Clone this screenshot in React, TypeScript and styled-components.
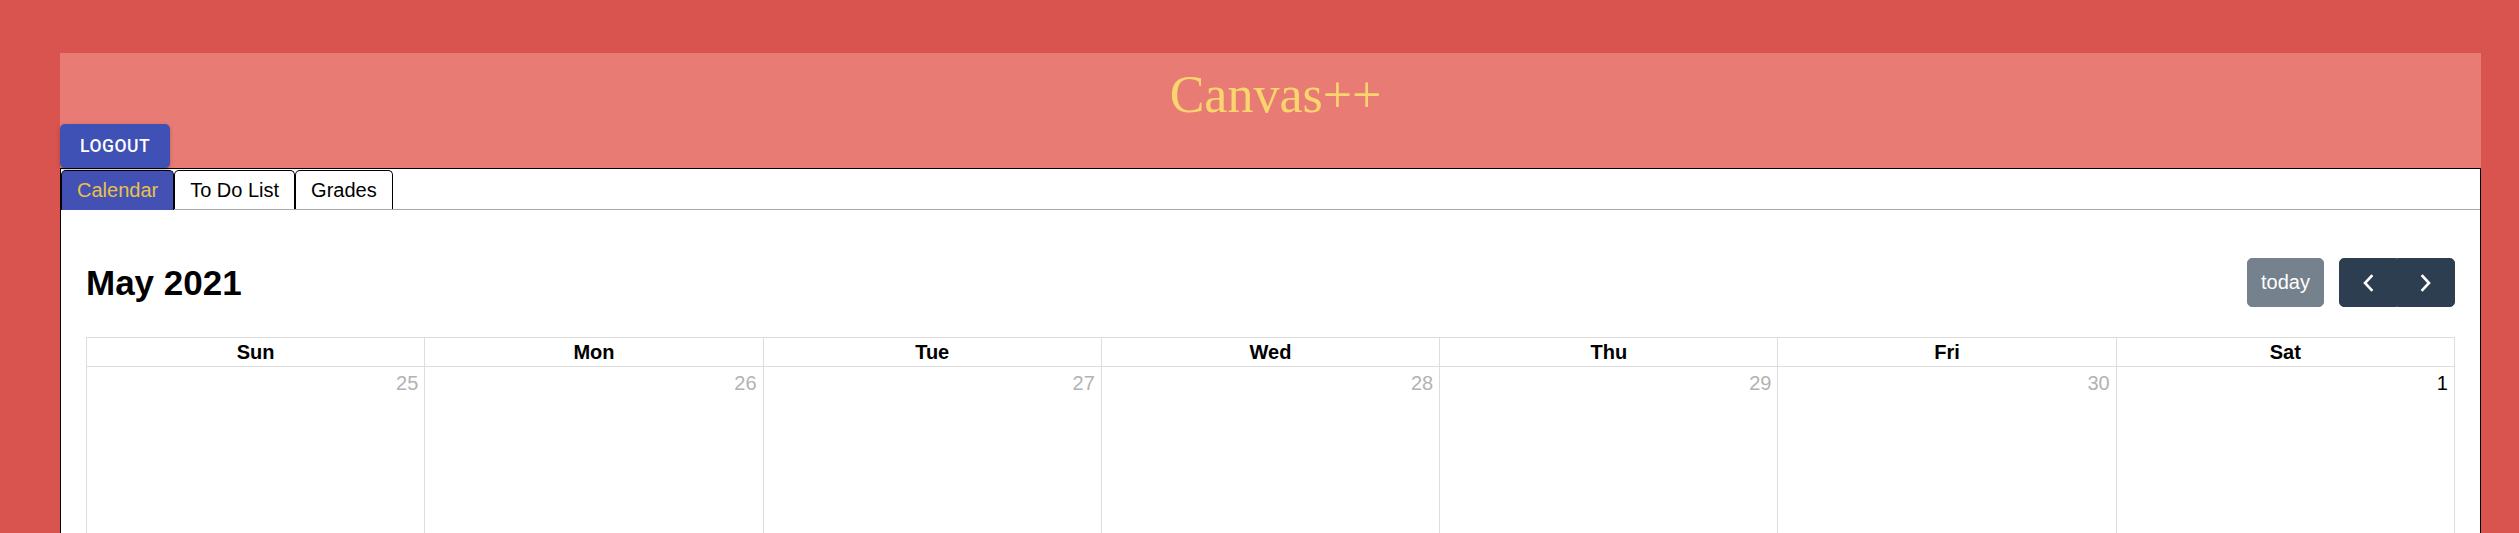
import React, { useState } from 'react';
import styled, { createGlobalStyle } from 'styled-components';

const GlobalStyle = createGlobalStyle`
  html, body {
    margin: 0;
    padding: 0;
    overflow: hidden;
    background: #d9534f;
  }
  * { box-sizing: border-box; }
`;

const Page = styled.div`
  padding: 53px 38px 0 60px;
  min-height: 100vh;
`;

const Header = styled.header`
  background: #e87b73;
  display: flex;
  flex-direction: column;
  align-items: flex-start;
`;

const SiteTitle = styled.h1`
  align-self: stretch;
  margin: 0;
  padding: 12px 0 0 10px;
  text-align: center;
  font-family: 'Liberation Serif', 'Times New Roman', serif;
  font-weight: 400;
  font-size: 52px;
  line-height: 59px;
  color: #f9d56e;
`;

const LogoutButton = styled.button`
  height: 44px;
  padding: 0 20px;
  border: none;
  border-radius: 5px;
  background: #3f51b5;
  color: #fff;
  font-family: Roboto, 'Liberation Sans', sans-serif;
  font-weight: 500;
  font-size: 17.5px;
  letter-spacing: 0.5px;
  text-transform: uppercase;
  box-shadow: 0 3px 1px -2px rgba(0, 0, 0, 0.2), 0 2px 2px 0 rgba(0, 0, 0, 0.14),
    0 1px 5px 0 rgba(0, 0, 0, 0.12);
  cursor: pointer;
`;

const Panel = styled.section`
  border: 1px solid #000;
  background: #fff;
  min-height: 400px;
`;

const TabList = styled.ul`
  display: flex;
  align-items: flex-end;
  list-style: none;
  margin: 1px 0 0;
  padding: 0;
  height: 40px;
  border-bottom: 1px solid #aaa;
`;

const Tab = styled.li<{ $active: boolean }>`
  position: relative;
  height: ${(p) => (p.$active ? '40px' : '39px')};
  margin-bottom: ${(p) => (p.$active ? '-1px' : '0')};
  padding: 7.5px 15px;
  border: 1px solid #000;
  border-bottom: none;
  border-radius: 5px 5px 0 0;
  background: ${(p) => (p.$active ? '#4351b5' : '#fff')};
  color: ${(p) => (p.$active ? '#e9c04b' : '#000')};
  font-family: 'Liberation Sans', Arial, sans-serif;
  font-size: 20px;
  line-height: 23px;
  cursor: pointer;
`;

const CalendarView = styled.div`
  padding: 48px 25px 0;
  font-family: 'Liberation Sans', Arial, sans-serif;
`;

const Toolbar = styled.div`
  display: flex;
  justify-content: space-between;
  align-items: center;
  margin-bottom: 30px;
`;

const MonthTitle = styled.h2`
  margin: 0;
  font-size: 35px;
  font-weight: 700;
  color: #000;
`;

const ToolbarGroup = styled.div`
  display: flex;
  gap: 15px;
`;

const ButtonGroup = styled.div`
  display: flex;
`;

const CalButton = styled.button<{ $disabled?: boolean; $pos?: 'left' | 'right' }>`
  display: flex;
  align-items: center;
  justify-content: center;
  height: 49px;
  padding: 0 13px;
  border: 1px solid #2c3e50;
  background: #2c3e50;
  color: #fff;
  font-family: 'Liberation Sans', Arial, sans-serif;
  font-size: 20px;
  opacity: ${(p) => (p.$disabled ? 0.65 : 1)};
  border-radius: ${(p) =>
    p.$pos === 'left' ? '5px 0 0 5px' : p.$pos === 'right' ? '0 5px 5px 0' : '5px'};
  cursor: pointer;
`;

const Grid = styled.div`
  display: grid;
  grid-template-columns: repeat(7, 1fr);
  border-top: 1px solid #ddd;
  border-left: 1px solid #ddd;
`;

const HeadCell = styled.div`
  padding: 2.5px;
  border-right: 1px solid #ddd;
  border-bottom: 1px solid #ddd;
  text-align: center;
  font-size: 20px;
  font-weight: 700;
  line-height: 23px;
  color: #000;
`;

const DayCell = styled.div`
  height: 287px;
  border-right: 1px solid #ddd;
  border-bottom: 1px solid #ddd;
`;

const DayNumber = styled.div<{ $other: boolean }>`
  padding: 5px 6px;
  text-align: right;
  font-size: 20px;
  line-height: 23px;
  color: ${(p) => (p.$other ? '#b3b3b3' : '#000')};
`;

const Chevron = ({ dir }: { dir: 'left' | 'right' }) => (
  <svg width="30" height="30" viewBox="0 0 30 30" fill="none">
    <path
      d={dir === 'left' ? 'M18.5 8 L12 15 L18.5 22' : 'M11.5 8 L18 15 L11.5 22'}
      stroke="#fff"
      strokeWidth="2.6"
      strokeLinecap="square"
      strokeLinejoin="miter"
    />
  </svg>
);

const weekdays = ['Sun', 'Mon', 'Tue', 'Wed', 'Thu', 'Fri', 'Sat'];

// May 2021 month view, starting Sunday April 25
const buildDays = () => {
  const days: { label: number; other: boolean }[] = [];
  const start = new Date(2021, 3, 25);
  for (let i = 0; i < 42; i++) {
    const d = new Date(start);
    d.setDate(start.getDate() + i);
    days.push({ label: d.getDate(), other: d.getMonth() !== 4 });
  }
  return days;
};

const tabs = ['Calendar', 'To Do List', 'Grades'];

const App: React.FC = () => {
  const [active, setActive] = useState(0);
  const days = buildDays();

  return (
    <>
      <GlobalStyle />
      <Page>
        <Header>
          <SiteTitle>Canvas++</SiteTitle>
          <LogoutButton>Logout</LogoutButton>
        </Header>
        <Panel>
          <TabList>
            {tabs.map((t, i) => (
              <Tab key={t} $active={i === active} onClick={() => setActive(i)}>
                {t}
              </Tab>
            ))}
          </TabList>
          <CalendarView>
            <Toolbar>
              <MonthTitle>May 2021</MonthTitle>
              <ToolbarGroup>
                <CalButton $disabled>today</CalButton>
                <ButtonGroup>
                  <CalButton $pos="left" aria-label="prev">
                    <Chevron dir="left" />
                  </CalButton>
                  <CalButton $pos="right" aria-label="next">
                    <Chevron dir="right" />
                  </CalButton>
                </ButtonGroup>
              </ToolbarGroup>
            </Toolbar>
            <Grid>
              {weekdays.map((w) => (
                <HeadCell key={w}>{w}</HeadCell>
              ))}
              {days.map((d, i) => (
                <DayCell key={i}>
                  <DayNumber $other={d.other}>{d.label}</DayNumber>
                </DayCell>
              ))}
            </Grid>
          </CalendarView>
        </Panel>
      </Page>
    </>
  );
};

export default App;
